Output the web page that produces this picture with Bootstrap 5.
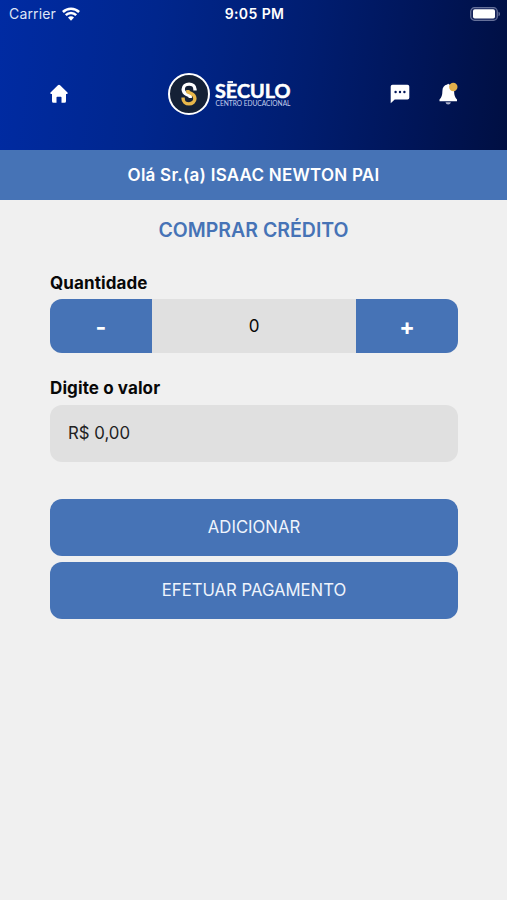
<!DOCTYPE html>
<html lang="pt-BR">
<head>
<meta charset="utf-8">
<meta name="viewport" content="width=device-width, initial-scale=1">
<title>Comprar crédito</title>
<link href="https://cdn.jsdelivr.net/npm/bootstrap@5.3.0/dist/css/bootstrap.min.css" rel="stylesheet">
<style>
  :root { --brand: #4673b6; }
  body { font-family: Inter, "Liberation Sans", sans-serif; background: #f0f0f0; color: #080808; min-height: 900px; }
  svg { display: block; }
  .app-header { height: 150px; background: linear-gradient(97deg, #002ba3 0%, #00268d 30%, #001d70 60%, #001558 82%, #000f42 100%); }
  .status-bar { height: 28px; padding: 0 7px 0 9px; font-size: 14px; line-height: 28px; }
  .status-bar > div { flex: 1 1 0; }
  .carrier { letter-spacing: .15px; color: #dfe5f6; }
  .wifi { margin-left: 6px; }
  .clock { font-size: 14px; letter-spacing: .4px; }
  .nav-icons { padding: 44px 48px 0 49px; }
  .logo { margin-left: 99px; }
  .bell { margin-left: 28px; }
  .welcome { height: 50px; padding-top: 2px; background: var(--brand); font-size: 17px; letter-spacing: .24px; }
  .page-title { height: 60px; padding-top: 2px; color: var(--brand); font-size: 19.5px; }
  .form-area { padding: 11px 49px 0 50px; }
  .field-label { font-size: 17px; line-height: 24px; height: 28px; letter-spacing: .1px; }
  .qty { height: 54px; margin-bottom: 23px; border-radius: 12px; background: #e0e0e0; font-size: 17px; }
  .qty-value { padding-top: 1px; }
  .qty-btn { width: 25%; padding-top: 4px; background: var(--brand); font-size: 23px; line-height: 1; }
  .amount { height: 57px; margin: 1px 0 37px; padding: 0 18px; border-radius: 12px; background: #e0e0e0; font-size: 16.8px; color: #222; }
  .actions { gap: 6px; }
  .action { height: 57px; padding-top: 2px; border-radius: 12px; background: var(--brand); color: #eff4fc; font-size: 16.7px; }
</style>
</head>
<body>
<header class="app-header text-white">
  <div class="status-bar d-flex align-items-center">
    <div class="d-flex align-items-center">
      <span class="carrier">Carrier</span>
      <svg class="wifi" width="18" height="14" viewBox="0 0 18 14" fill="none" stroke="#fff" stroke-width="2.5"><path d="M.9 5a11.6 11.6 0 0 1 16.200 0M3.800 8.200a7.300 7.300 0 0 1 10.400 0"/><path d="M6 10.600a4.200 4.200 0 0 1 6 0L9 13.800z" fill="#fff" stroke="none"/></svg>
    </div>
    <div class="clock text-center fw-semibold">9:05 PM</div>
    <div class="d-flex justify-content-end">
      <svg width="30" height="14" viewBox="0 0 30 14"><rect x=".7" y=".7" width="26.6" height="12.6" rx="3.8" fill="#17255c" stroke="#66719a" stroke-width="1.2"/><rect x="3" y="2.3" width="22" height="9.2" rx="1.8" fill="#fff"/><path d="M28.5 4.8q1.5.5 1.5 2.2t-1.5 2.2z" fill="#66719a"/></svg>
    </div>
  </div>
  <nav class="nav-icons d-flex align-items-center">
    <svg width="20" height="20" viewBox="0 0 20 20" fill="#fff" aria-label="Início"><path d="M8.900 1.200q1.100-.9 2.200 0l7.400 7.200q1 1.300-.7 1.700H17v7.200q0 1.500-1.500 1.500h-3V13.500q0-.8-.8-.8H8.300q-.8 0-.8.8v5.300h-3q-1.500 0-1.500-1.500v-7.200h-.8q-1.700-.4-.7-1.700z"/></svg>
    <svg class="logo" width="124" height="44" viewBox="168 72 124 44" aria-label="Século Centro Educacional">
      <circle cx="189" cy="94" r="20" fill="#152136" stroke="#fff" stroke-width="2"/>
      <g fill="none" stroke-width="3.400">
        <path d="M195 90.600V89.300a5.900 5.200 0 0 0-11.800 0c0 3 1.800 4.300 3.600 5.200l3.400 1.500v2" stroke="#fff"/>
        <path d="M183.100 97.400v1.300a5.900 5.200 0 0 0 11.800 0c0-3-1.800-4.300-3.600-5.200l-3.400-1.500v-2" stroke="#e8b74a"/>
      </g>
      <text x="215" y="98" fill="#fff" font-family="Lato" font-size="18" font-weight="700" textLength="75.500" lengthAdjust="spacingAndGlyphs" stroke="#fff" stroke-width=".5">SECULO</text>
      <path d="M227.500 82h5.500" stroke="#fff" stroke-width="1.800"/>
      <text x="215.500" y="106" fill="#c5cfee" font-family="Lato" font-size="7.400" textLength="75" lengthAdjust="spacingAndGlyphs">CENTRO EDUCACIONAL</text>
    </svg>
    <svg class="ms-auto" width="20" height="20" viewBox="0 0 20 20" aria-label="Mensagens"><path d="M2.500.8h15q1.800 0 1.800 1.800v11.200q0 1.800-1.800 1.800H4.700L.7 19.300V2.600Q.7.8 2.500.8z" fill="#fff"/><g fill="#001457"><circle cx="5.600" cy="8" r="1.200"/><circle cx="10" cy="8" r="1.200"/><circle cx="14.400" cy="8" r="1.200"/></g></svg>
    <svg class="bell" width="21" height="24" viewBox="0 0 21 24" aria-label="Notificações"><path d="M9.300 2.500q.9-1.300 1.800 0 5 1 5 6.500 0 6 2.900 8.500v1.700H1.500v-1.700Q4.400 15 4.400 9q0-5.500 4.900-6.500z" fill="#fff"/><path d="M7.500 20.200h5.400q-.4 2.200-2.700 2.200t-2.700-2.200z" fill="#aab1cb"/><circle cx="15.300" cy="5" r="4.200" fill="#e3b04b"/></svg>
  </nav>
</header>
<div class="welcome d-flex align-items-center justify-content-center text-white fw-semibold">Olá Sr.(a) ISAAC NEWTON PAI</div>
<main>
  <h1 class="page-title d-flex align-items-center justify-content-center fw-semibold m-0">COMPRAR CRÉDITO</h1>
  <div class="form-area">
    <div class="field-label fw-bold">Quantidade</div>
    <div class="qty d-flex align-items-stretch overflow-hidden">
      <button class="qty-btn border-0 text-white fw-bold" type="button">-</button>
      <div class="qty-value flex-fill d-flex align-items-center justify-content-center">0</div>
      <button class="qty-btn border-0 text-white fw-bold" type="button">+</button>
    </div>
    <div class="field-label fw-bold">Digite o valor</div>
    <div class="amount d-flex align-items-center">R$ 0,00</div>
    <div class="actions d-grid">
      <button class="action border-0" type="button">ADICIONAR</button>
      <button class="action border-0" type="button">EFETUAR PAGAMENTO</button>
    </div>
  </div>
</main>
<script src="https://cdn.jsdelivr.net/npm/bootstrap@5.3.0/dist/js/bootstrap.bundle.min.js"></script>
</body>
</html>
